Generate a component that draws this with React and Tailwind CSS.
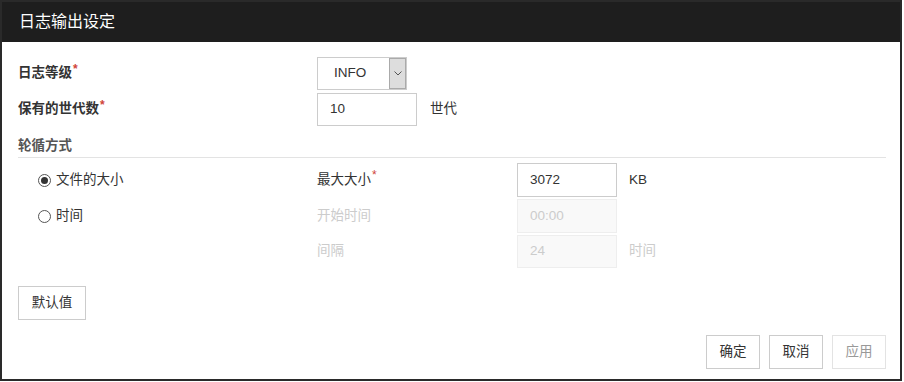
import React from "react";

const font = { fontFamily: '"Liberation Sans", "Noto Sans CJK SC", sans-serif' };

function Star() {
  return <span className="text-[#d0453a] text-[12px] relative top-[-5px] ml-[1px] leading-none">*</span>;
}

function Radio({ checked, label }) {
  return (
    <div className="flex items-center gap-[5px]">
      <span className="w-[13px] h-[13px] rounded-full border border-[#555] flex items-center justify-center bg-white">
        {checked && <span className="w-[7px] h-[7px] rounded-full bg-[#333]" />}
      </span>
      <span className="text-[13.5px] text-[#333]">{label}</span>
    </div>
  );
}

function Input({ value, disabled, h = "h-[34px]" }) {
  return (
    <div
      className={`w-[100px] ${h} border flex items-center pl-[12px] text-[13.5px] ${
        disabled ? "border-[#eeeeee] bg-[#f9f9f9] text-[#cccccc]" : "border-[#cccccc] bg-white text-[#333]"
      }`}
    >
      {value}
    </div>
  );
}

function Btn({ children, disabled, w = "w-[54px]" }) {
  return (
    <div
      className={`${w} h-[34px] border flex items-center justify-center text-[13.5px] bg-white ${
        disabled ? "border-[#e3e3e3] text-[#999]" : "border-[#cccccc] text-[#333]"
      }`}
    >
      {children}
    </div>
  );
}

export default function App() {
  return (
    <div style={font} className="w-[902px] h-[381px] border-2 border-[#2a2a2a] bg-white flex flex-col">
      <div className="h-[40px] bg-[#1e1e1e] flex items-center pl-[17px] text-white text-[16px]">日志输出设定</div>
      <div className="pl-[16px] pr-[14px] pt-[15px] flex flex-col">
        <div className="flex items-center h-[33px]">
          <div className="w-[299px] text-[13.5px] font-bold text-[#333] flex items-center">
            日志等级<Star />
          </div>
          <div className="w-[90px] h-[33px] border border-[#cccccc] flex">
            <div className="flex-1 flex items-center pl-[16px] text-[13.5px] text-[#333]">INFO</div>
            <div className="w-[17px] bg-[#dddddd] border border-[#aaaaaa] flex items-center justify-center">
              <svg width="8" height="5" viewBox="0 0 8 5">
                <path d="M0.5 0.5 L4 4 L7.5 0.5" fill="none" stroke="#555" strokeWidth="1" />
              </svg>
            </div>
          </div>
        </div>
        <div className="flex items-center h-[33px] mt-[3px]">
          <div className="w-[299px] text-[13.5px] font-bold text-[#333] flex items-center">
            保有的世代数<Star />
          </div>
          <Input value="10" h="h-[33px]" />
          <div className="ml-[13px] text-[13.5px] text-[#333]">世代</div>
        </div>
        <div className="mt-[11px] pb-[2px] border-b border-[#e3e3e3] text-[13.5px] font-bold text-[#555] leading-[18px]">
          轮循方式
        </div>
        <div className="flex items-center h-[34px] mt-[5px]">
          <div className="w-[299px] pl-[20px]">
            <Radio checked label="文件的大小" />
          </div>
          <div className="w-[200px] text-[13.5px] text-[#333] flex items-center">
            最大大小<Star />
          </div>
          <Input value="3072" />
          <div className="ml-[12px] text-[13.5px] text-[#333]">KB</div>
        </div>
        <div className="flex items-center h-[34px] mt-[2px]">
          <div className="w-[299px] pl-[20px]">
            <Radio label="时间" />
          </div>
          <div className="w-[200px] text-[13.5px] text-[#cccccc]">开始时间</div>
          <Input value="00:00" disabled />
        </div>
        <div className="flex items-center h-[33px] mt-[2px]">
          <div className="w-[299px]" />
          <div className="w-[200px] text-[13.5px] text-[#cccccc]">间隔</div>
          <Input value="24" disabled h="h-[33px]" />
          <div className="ml-[12px] text-[13.5px] text-[#cccccc]">时间</div>
        </div>
        <div className="mt-[18px] flex">
          <Btn w="w-[68px]">默认值</Btn>
        </div>
        <div className="mt-[15px] flex justify-end gap-[9px]">
          <Btn>确定</Btn>
          <Btn>取消</Btn>
          <Btn disabled>应用</Btn>
        </div>
      </div>
    </div>
  );
}
